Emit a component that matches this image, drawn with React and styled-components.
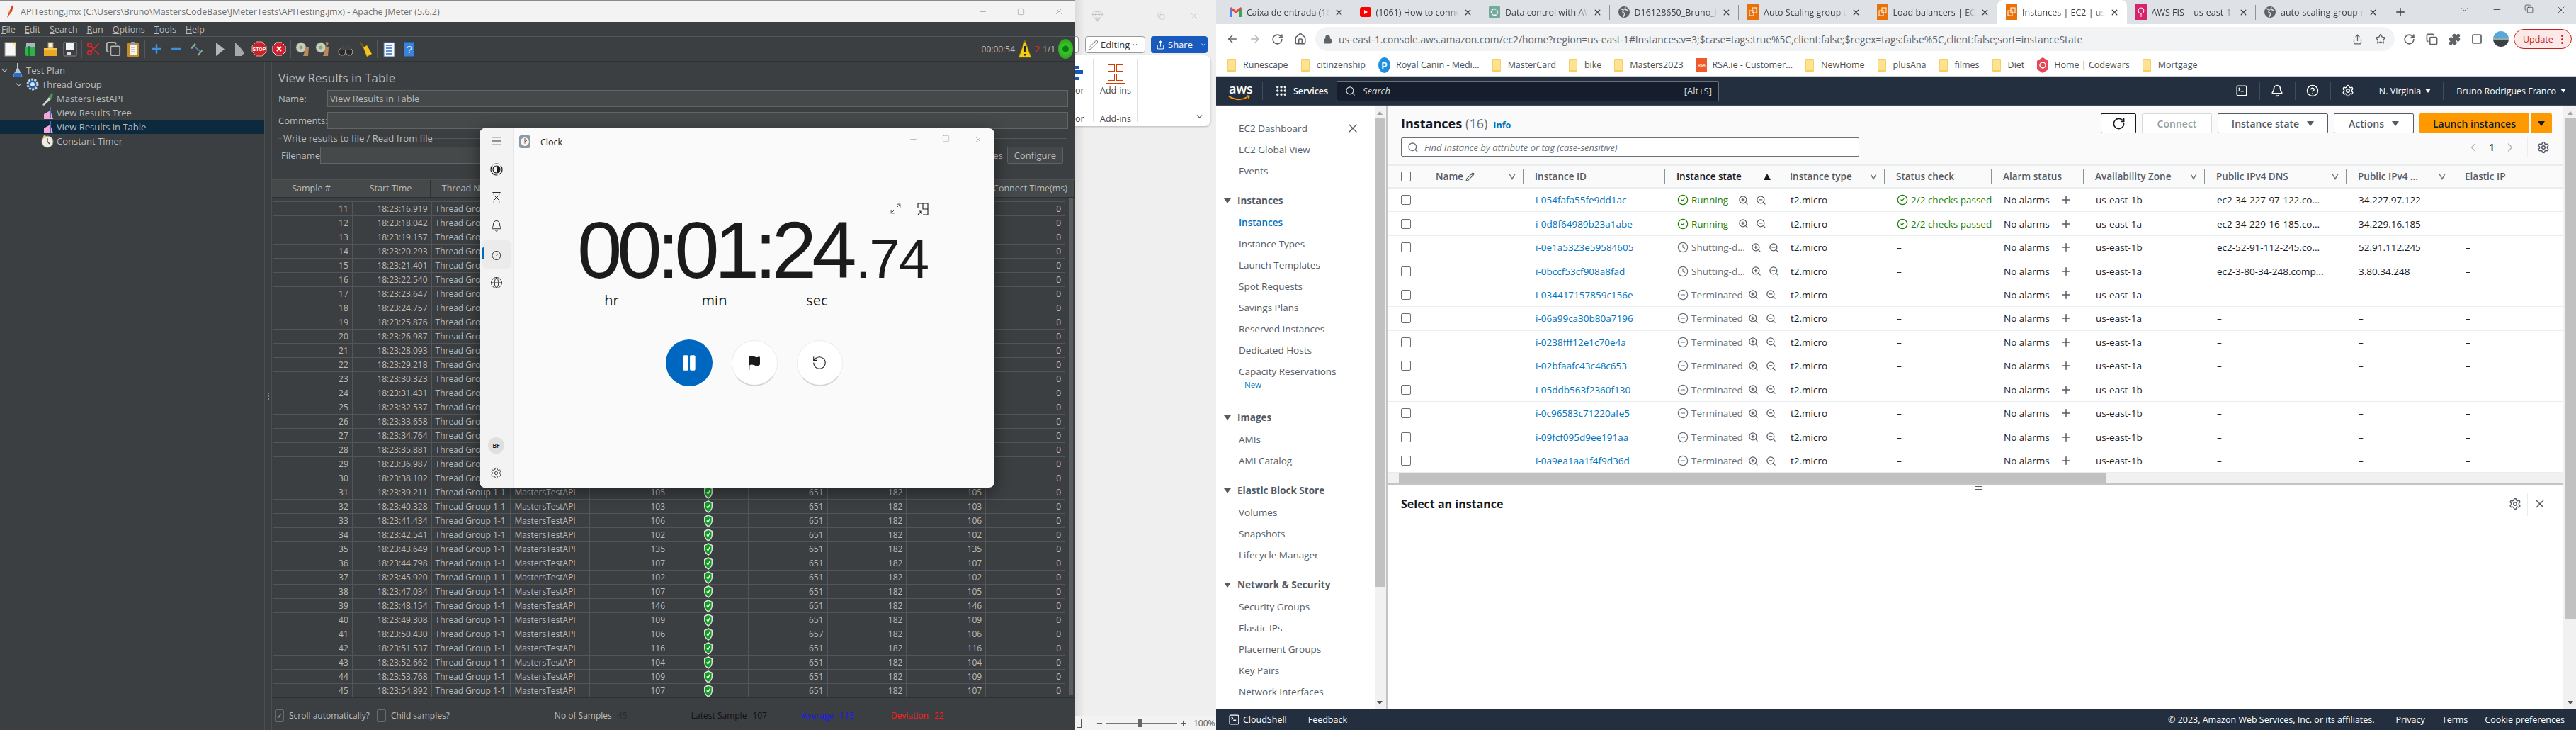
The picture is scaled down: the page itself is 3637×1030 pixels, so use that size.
import React from 'react';
import styled, { createGlobalStyle } from 'styled-components';
import {
  ArrowLeft, ArrowRight, Bell, ChevronDown, ChevronLeft, ChevronRight, CircleCheck, CircleHelp, CircleMinus,
  Clock, Copy, Flag, Gem, Globe, Grip, Hourglass, House, Lock, Maximize2, Menu, Minus, Pause, Pencil, Plus,
  Puzzle, RotateCcw, RotateCw, Scissors, Search, Settings, Share, Square, SquareTerminal, Star, Timer, X, ZoomIn, ZoomOut,
} from 'lucide-react';

const UI = '"Open Sans", "Noto Sans", sans-serif';

const GlobalStyle = createGlobalStyle`
  html, body { margin: 0; padding: 0; overflow: hidden; background: #efefef; }
  * { box-sizing: border-box; }
`;

const Desktop = styled.div`
  position: relative;
  display: flex;
  width: 3637px;
  height: 1030px;
  overflow: hidden;
  font-family: ${UI};
`;

/* ---------- JMeter ---------- */
const JMeter = styled.div`
  width: 1518px;
  flex: none;
  display: flex;
  flex-direction: column;
  background: #3c3f41;
  color: #bbbbbb;
  font-size: 12px;
`;
const TitleBar = styled.div`
  height: 31px;
  flex: none;
  display: flex;
  align-items: center;
  background: #f3f3f3;
  border-top: 1px solid #8a8a8a;
  color: #6f6f6f;
  font-size: 12.5px;
  padding: 0 0 0 7px;
  gap: 8px;
`;
const TitleText = styled.span`flex: 1;`;
const WinButton = styled.span`
  width: 46px;
  display: flex;
  justify-content: center;
  color: ${p => p.$color || '#777'};
`;
const MenuBar = styled.div`
  height: 21px;
  flex: none;
  display: flex;
  align-items: center;
  gap: 13px;
  padding-left: 2px;
  border-bottom: 1px solid #55585a;
  font-size: 12.5px;
  span::first-letter { text-decoration: underline; }
`;
const ToolBar = styled.div`
  height: 35px;
  flex: none;
  display: flex;
  align-items: center;
  padding-left: 1px;
  border-bottom: 1px solid #2f3234;
`;
const ToolSlot = styled.span`
  width: 28px;
  display: flex;
  justify-content: center;
`;
const ToolSep = styled.span`
  width: 5px;
  height: 26px;
  display: flex;
  justify-content: center;
  &::after { content: ''; width: 1px; background: #55585a; }
`;
const ToolStatus = styled.div`
  margin-left: auto;
  display: flex;
  align-items: center;
  gap: 4px;
  padding-right: 3px;
  font-size: 12px;
`;
const RedCount = styled.span`color: #ff2020;`;
const Orb = styled.span`
  width: 21px;
  height: 28px;
  border-radius: 50%;
  background: radial-gradient(circle, #0a7d0a 22%, #38c62c 30%, #2fa51f 75%, #178a10);
`;
const JBody = styled.div`
  flex: 1;
  display: flex;
  min-height: 0;
`;
const TreePane = styled.div`
  position: relative;
  width: 374px;
  flex: none;
  padding-top: 2px;
  border-right: 1px solid #4c4f51;
`;
const Guide = styled.span`
  position: absolute;
  left: ${p => p.$x}px;
  top: 21px;
  height: ${p => p.$h}px;
  width: 1px;
  background: #4c4f51;
`;
const TreeRow = styled.div`
  height: 20px;
  display: flex;
  align-items: center;
  gap: 4px;
  padding-left: ${p => p.$indent}px;
  font-size: 13px;
  background: ${p => p.$selected ? '#0d293e' : 'transparent'};
`;
const Splitter = styled.div`
  width: 10px;
  flex: none;
  display: flex;
  align-items: center;
  justify-content: center;
  border-right: 1px solid #4c4f51;
  padding-bottom: 0;
`;
const SplitGrip = styled.span`
  width: 2px;
  height: 10px;
  margin-top: 0;
  border-left: 2px dotted #8a8d8f;
`;
const ResultsPane = styled.div`
  flex: 1;
  display: flex;
  flex-direction: column;
  min-width: 0;
`;
const ResultsForm = styled.div`
  padding: 11px 10px 0 9px;
  display: flex;
  flex-direction: column;
`;
const PaneTitle = styled.div`
  height: 24px;
  font-size: 17px;
  line-height: 24px;
  margin-bottom: 5px;
`;
const FormRow = styled.div`
  height: 24px;
  display: flex;
  align-items: center;
  margin-bottom: 7px;
  font-size: 13px;
`;
const FormLabel = styled.span`
  width: ${p => p.$w}px;
  padding-left: ${p => p.$pad || 0}px;
  flex: none;
`;
const Field = styled.div`
  flex: 1;
  height: 24px;
  background: #45494a;
  border: 1px solid #646464;
  padding-left: 3px;
  line-height: 22px;
`;
const Legend = styled.div`
  height: 18px;
  display: flex;
  align-items: center;
  gap: 2px;
  font-size: 13px;
  margin-top: -3px;
  margin-bottom: 3px;
  padding-right: 2px;
  &::before { content: ''; width: 5px; height: 1px; background: #55585a; }
  &::after { content: ''; flex: 1; height: 1px; background: #55585a; }
`;
const ConfigureBtn = styled.span`
  width: 79px;
  height: 24px;
  margin-left: 7px;
  margin-right: 7px;
  flex: none;
  border: 1px solid #5e6264;
  border-radius: 2px;
  background: #44484a;
  text-align: center;
  line-height: 22px;
`;
const JTable = styled.div`
  margin-top: 15px;
  flex: 1;
  display: flex;
  flex-direction: column;
  position: relative;
  min-height: 0;
`;
const JHead = styled.div`
  height: 26px;
  flex: none;
  display: grid;
  grid-template-columns: 112px 112px repeat(7, 112px) 1fr;
  background: #45494a;
  border-top: 1px solid #4d5153;
  border-bottom: 1px solid #2f3234;
  margin-bottom: 5px;
`;
const JHeadCell = styled.span`
  text-align: center;
  line-height: 24px;
  font-size: 12.5px;
  white-space: nowrap;
  overflow: hidden;
  border-right: 1px solid #2f3234;
`;
const JRow = styled.div`
  height: 20px;
  flex: none;
  margin-left: 2px;
  width: 1118px;
  display: grid;
  grid-template-columns: repeat(10, 1fr);
  border-top: 1px solid #52565a;
`;
const JCell = styled.span`
  display: flex;
  align-items: center;
  justify-content: ${p => p.$align || 'flex-end'};
  padding: 0 5px;
  border-right: 1px solid #52565a;
  line-height: 19px;
  white-space: nowrap;
  overflow: hidden;
`;
const JScroll = styled.span`
  position: absolute;
  right: 3px;
  top: 27px;
  bottom: 4px;
  width: 5px;
  background: #5a5d5f;
`;
const JFooter = styled.div`
  height: 46px;
  flex: none;
  display: flex;
  align-items: center;
  padding: 4px 0 0 4px;
  border-top: 1px solid #2f3234;
`;
const JCheck = styled.span`
  width: 13px;
  height: 18px;
  border: 1px solid #6b6b6b;
  border-radius: 2px;
  display: flex;
  align-items: center;
  justify-content: center;
  font-size: 11px;
  margin-right: 7px;
`;
const FooterText = styled.span`
  margin-right: ${p => p.$mr || 0}px;
  white-space: nowrap;
`;
const Stat = styled.span`
  display: flex;
  gap: 8px;
  color: ${p => p.$color};
  width: ${p => p.$w}px;
  flex: none;
  white-space: nowrap;
`;
const StatLabel = styled.span`
  color: ${p => p.$color || 'inherit'};
`;

/* ---------- Clock ---------- */
const ClockWindow = styled.div`
  position: absolute;
  left: 677px;
  top: 181px;
  width: 727px;
  height: 507px;
  display: flex;
  border-radius: 8px;
  background: #fafafa;
  box-shadow: 0 6px 22px rgba(0, 0, 0, 0.45);
  overflow: hidden;
  color: #1b1b1b;
`;
const ClockNav = styled.div`
  width: 48px;
  flex: none;
  display: flex;
  flex-direction: column;
  align-items: center;
  background: #f3f3f3;
  border-right: 1px solid #e8e8e8;
`;
const NavItem = styled.span`
  position: relative;
  width: 40px;
  height: 40px;
  flex: none;
  display: flex;
  align-items: center;
  justify-content: center;
  border-radius: 5px;
  background: ${p => p.$active ? '#ebebeb' : 'transparent'};
  &::before {
    content: '';
    display: ${p => p.$active ? 'block' : 'none'};
    position: absolute;
    left: 0;
    top: 10px;
    width: 3px;
    height: 17px;
    border-radius: 2px;
    background: #0067c0;
  }
`;
const NavTop = styled.div`
  display: flex;
  flex-direction: column;
  align-items: center;
  margin-top: -2px;
`;
const Avatar = styled.span`
  width: 23px;
  height: 23px;
  margin-top: auto;
  border-radius: 50%;
  background: #dfdfdf;
  display: flex;
  align-items: center;
  justify-content: center;
  font-size: 9px;
  font-weight: 600;
`;
const NavGear = styled.span`
  margin: 19px 0 12px;
  display: flex;
`;
const ClockMain = styled.div`
  position: relative;
  flex: 1;
  display: flex;
  flex-direction: column;
`;
const ClockTitle = styled.div`
  height: 38px;
  display: flex;
  align-items: center;
  padding-left: 8px;
  gap: 14px;
  font-size: 12.5px;
`;
const ClockControls = styled.div`
  margin-left: auto;
  display: flex;
  color: #8c8c8c;
  margin-top: -6px;
`;
const TimeRow = styled.div`
  margin-top: 74px;
  display: flex;
  justify-content: center;
  align-items: baseline;
  font-family: "Liberation Sans", sans-serif;
  font-size: 114px;
  line-height: 120px;
  letter-spacing: -7px;
  padding-right: 4px;
`;
const Fraction = styled.span`
  font-size: 78px;
  letter-spacing: -2px;
  margin-left: 5px;
`;
const TimeTools = styled.div`
  position: absolute;
  left: 531px;
  top: 105px;
  display: flex;
  gap: 22px;
`;
const UnitRow = styled.div`
  margin-top: -15px;
  padding-left: 66px;
  display: flex;
  font-size: 20px;
  line-height: 28px;
`;
const Unit = styled.span`
  width: 145px;
  text-align: center;
`;
const ClockButtons = styled.div`
  margin-top: 41px;
  display: flex;
  justify-content: center;
  align-items: center;
  gap: 27px;
`;
const RoundBtn = styled.span`
  width: ${p => p.$primary ? 66 : 65}px;
  height: ${p => p.$primary ? 66 : 65}px;
  border-radius: 50%;
  display: flex;
  align-items: center;
  justify-content: center;
  background: ${p => p.$primary ? '#0067c0' : '#ffffff'};
  border: ${p => p.$primary ? 'none' : '1px solid #ececec'};
  border-bottom-width: ${p => p.$primary ? 0 : 2}px;
  border-bottom-color: #d4d4d4;
`;

/* ---------- Word ---------- */
const Word = styled.div`
  width: 199px;
  flex: none;
  display: flex;
  flex-direction: column;
  background: linear-gradient(90deg, #dcdcdc 0, #efefef 14px);
  color: #444;
`;
const WordTitle = styled.div`
  height: 51px;
  flex: none;
  display: flex;
  align-items: center;
  padding-left: 23px;
  gap: 25px;
  color: #b3b3b3;
  padding-bottom: 6px;
`;
const WordActions = styled.div`
  height: 24px;
  flex: none;
  display: flex;
  gap: 8px;
`;
const CutButton = styled.span`
  width: 5px;
  margin-right: 1px;
  background: #fff;
  border: 1px solid #9a9a9a;
  border-left: 0;
  border-radius: 0 4px 4px 0;
`;
const EditingBtn = styled.span`
  width: 85px;
  display: flex;
  align-items: center;
  gap: 3px;
  padding-left: 3px;
  background: #fff;
  border: 1px solid #9a9a9a;
  border-radius: 4px;
  font-size: 13px;
  color: #333;
`;
const ShareBtn = styled.span`
  width: 80px;
  display: flex;
  align-items: center;
  gap: 4px;
  padding-left: 7px;
  background: #185abd;
  border-radius: 4px;
  color: #fff;
  font-size: 13px;
`;
const Ribbon = styled.div`
  position: relative;
  width: 191px;
  height: 100px;
  margin-top: 3px;
  display: flex;
  background: #fff;
  border-radius: 0 8px 8px 0;
  box-shadow: 0 1px 3px rgba(0, 0, 0, 0.25);
  font-size: 12.5px;
  color: #444;
`;
const RibbonGroup = styled.div`
  width: ${p => p.$w}px;
  height: 89px;
  flex: none;
  display: flex;
  flex-direction: column;
  align-items: ${p => p.$align || 'center'};
  border-right: 1px solid #e1e1e1;
  margin: 5px 0 6px;
`;
const RibbonIcon = styled.span`
  height: 33px;
  margin-top: 4px;
  flex: none;
  display: flex;
  justify-content: center;
`;
const RibbonLabel = styled.span`
  height: 40px;
  flex: none;
  line-height: 18px;
  margin-top: -1px;
`;
const RibbonGroupName = styled.span`
  flex: none;
  line-height: 18px;
`;
const RibbonChevron = styled.span`
  position: absolute;
  right: 9px;
  bottom: 7px;
  display: flex;
  color: #555;
`;
const WordStatus = styled.div`
  margin-top: auto;
  height: 20px;
  display: flex;
  align-items: center;
  background: #f3f3f3;
  font-size: 12px;
  color: #555;
`;
const StatusGlyph = styled.span`
  width: 7px;
  height: 13px;
  margin-left: 2px;
  margin-right: 20px;
  border: 1px solid #555;
  border-left: 0;
`;
const ZoomTrack = styled.span`
  position: relative;
  width: 100px;
  height: 1px;
  margin: 0 3px 0 1px;
  background: #777;
  &::after {
    content: '';
    position: absolute;
    left: 45px;
    top: -5px;
    width: 5px;
    height: 11px;
    background: #666;
  }
`;

/* ---------- Chrome ---------- */
const Chrome = styled.div`
  width: 1920px;
  flex: none;
  display: flex;
  flex-direction: column;
  background: #fff;
`;
const TabStrip = styled.div`
  height: 34px;
  flex: none;
  display: flex;
  align-items: stretch;
  background: #dee1e6;
  padding-left: 8px;
`;
const Tab = styled.div`
  position: relative;
  width: 182.5px;
  flex: none;
  display: flex;
  align-items: center;
  gap: 7px;
  padding: 0 11px 0 12px;
  font-size: 12.5px;
  color: #3c4043;
  background: ${p => p.$active ? '#fff' : 'transparent'};
  border-radius: ${p => p.$active ? '8px 8px 0 0' : '0'};
  &::after {
    content: '';
    display: ${p => p.$sep ? 'block' : 'none'};
    position: absolute;
    right: 0;
    top: 7px;
    bottom: 6px;
    width: 1px;
    background: #8f9296;
  }
`;
const TabTitle = styled.span`
  flex: 1;
  white-space: nowrap;
  overflow: hidden;
  mask-image: linear-gradient(90deg, #000 88%, transparent);
`;
const StripRight = styled.div`
  flex: 1;
  display: flex;
  align-items: center;
  color: #3c4043;
  padding: 0 13px 0 12px;
`;
const StripControls = styled.div`
  margin-left: auto;
  display: flex;
  gap: 31px;
  margin-top: -6px;
`;
const Toolbar = styled.div`
  height: 42px;
  flex: none;
  display: flex;
  align-items: center;
  padding-left: 14px;
  color: #5f6368;
`;
const NavBtn = styled.span`
  width: 32px;
  display: flex;
  justify-content: flex-start;
  color: ${p => p.$dim ? '#b4b7bb' : '#5f6368'};
`;
const Omnibox = styled.div`
  width: 1524px;
  height: 34px;
  flex: none;
  margin-left: -2px;
  display: flex;
  align-items: center;
  padding: 0 12px 0 11px;
  gap: 9px;
  border-radius: 17px;
  background: #f1f3f4;
`;
const Url = styled.span`
  flex: 1;
  font-size: 13.8px;
  color: #5f6368;
  white-space: nowrap;
`;
const Extensions = styled.div`
  display: flex;
  align-items: center;
  gap: 15px;
  padding-left: 12px;
  flex: 1;
`;
const ProfilePic = styled.span`
  width: 22px;
  height: 22px;
  border-radius: 50%;
  background: linear-gradient(180deg, #5aa7d8 0 45%, #8fb2a5 45% 60%, #3b3f46 60%);
`;
const UpdatePill = styled.span`
  width: 82px;
  height: 28px;
  margin-left: -8px;
  display: flex;
  align-items: center;
  justify-content: space-between;
  padding: 0 11px 0 12px;
  border: 1px solid #c5221f;
  border-radius: 14px;
  background: #fce8e6;
  color: #c5221f;
  font-size: 12.5px;
`;
const Dots = styled.span`
  display: flex;
  flex-direction: column;
  gap: 2px;
  i { width: 3px; height: 3px; border-radius: 50%; background: #c5221f; }
`;
const Bookmarks = styled.div`
  height: 32px;
  flex: none;
  display: flex;
  align-items: center;
  gap: 18px;
  padding-left: 16px;
  border-bottom: 1px solid #d0d3d6;
  font-size: 12.5px;
  color: #4a4d51;
`;
const Bookmark = styled.span`
  display: flex;
  align-items: center;
  gap: ${p => p.$gap || 10}px;
  white-space: nowrap;
`;
const Folder = styled.span`
  width: 12px;
  height: 18px;
  background: #fde293;
  border: 1px solid #f8cf5c;
  border-bottom-width: 2px;
  border-radius: 1px;
`;
const AwsHeader = styled.div`
  height: 42px;
  flex: none;
  display: flex;
  align-items: center;
  background: #232f3e;
  color: #fff;
  font-size: 13px;
  border-bottom: 2px solid #3f4a58;
`;
const AwsLogo = styled.span`
  position: relative;
  width: 66px;
  height: 26px;
  padding-left: 18px;
  flex: none;
  border-right: 1px solid #414d5c;
  font-size: 18px;
  font-weight: 600;
  line-height: 20px;
`;
const LogoSmile = styled.span`
  position: absolute;
  left: 17px;
  top: 19px;
`;
const ServicesBtn = styled.span`
  display: flex;
  align-items: center;
  gap: 8px;
  padding-left: 17px;
  width: 104px;
  flex: none;
  font-weight: 600;
  font-size: 12.5px;
`;
const AwsSearch = styled.div`
  width: 540px;
  height: 29px;
  flex: none;
  display: flex;
  align-items: center;
  gap: 10px;
  padding: 0 9px 0 11px;
  background: #161e2d;
  border: 1px solid #687078;
  border-radius: 2px;
  color: #d5dbdb;
  i { flex: 1; font-size: 13px; }
`;
const HeaderRight = styled.div`
  margin-left: auto;
  display: flex;
  align-items: center;
  height: 26px;
  padding-right: 14px;
`;
const HeaderIcon = styled.span`
  width: 50px;
  height: 26px;
  display: flex;
  align-items: center;
  justify-content: center;
  border-right: 1px solid #414d5c;
`;
const HeaderMenu = styled.span`
  display: flex;
  align-items: center;
  gap: 6px;
  padding: 0 ${p => p.$last ? 0 : 17}px 0 18px;
  height: 26px;
  font-size: 12.5px;
  font-weight: 500;
  white-space: nowrap;
  border-right: ${p => p.$last ? 'none' : '1px solid #414d5c'};
`;
const Caret = styled.span`
  width: 0;
  height: 0;
  border-left: ${p => p.$s || 4}px solid transparent;
  border-right: ${p => p.$s || 4}px solid transparent;
  border-top: ${p => (p.$s || 4) + 2}px solid ${p => p.$color || 'currentColor'};
  flex: none;
`;
const ConsoleBody = styled.div`
  flex: 1;
  display: flex;
  min-height: 0;
`;
const Sidebar = styled.div`
  position: relative;
  width: 224px;
  flex: none;
  padding: 16px 0 0 32px;
  font-size: 13.5px;
  color: #545b64;
`;
const SideItem = styled.div`
  height: 30px;
  line-height: 30px;
  white-space: nowrap;
  color: ${p => p.$active ? '#0073bb' : '#545b64'};
  font-weight: ${p => p.$active ? 600 : 400};
`;
const SideHeader = styled.div`
  height: 30px;
  margin: ${p => p.$flush ? 0 : 12}px 0 1px -21px;
  display: flex;
  align-items: center;
  gap: 9px;
  font-weight: 700;
  white-space: nowrap;
`;
const NewTag = styled.div`
  width: fit-content;
  margin: -4px 0 22px 8px;
  font-size: 11.5px;
  font-weight: 500;
  line-height: 16px;
  color: #0073bb;
  border-bottom: 1px dashed #0073bb;
`;
const SideClose = styled.span`
  position: absolute;
  right: 21px;
  top: 21px;
  display: flex;
  color: #545b64;
`;
const VScroll = styled.div`
  position: relative;
  width: ${p => p.$w}px;
  flex: none;
  background: #f1f1f1;
  border-right: ${p => p.$line ? '2px solid #c4c4c4' : '0'};
`;
const VThumb = styled.span`
  position: absolute;
  left: ${p => p.$left}px;
  right: ${p => p.$right}px;
  top: 17px;
  height: ${p => p.$h}px;
  background: #c1c1c1;
`;
const ArrowUp = styled.span`
  position: absolute;
  left: ${p => p.$left}px;
  top: 7px;
  border-left: 4px solid transparent;
  border-right: 4px solid transparent;
  border-bottom: 5px solid #a3a3a3;
`;
const ArrowDown = styled.span`
  position: absolute;
  left: ${p => p.$left}px;
  bottom: 7px;
  border-left: 4px solid transparent;
  border-right: 4px solid transparent;
  border-top: 5px solid #505050;
`;
const Main = styled.div`
  flex: 1;
  min-width: 0;
  display: flex;
  flex-direction: column;
  background: #fafafa;
`;
const InstancesTop = styled.div`
  padding: 10px 16px 0 19px;
  flex: none;
`;
const TopRow = styled.div`
  height: 28px;
  display: flex;
  align-items: center;
  gap: 8px;
`;
const Heading = styled.div`
  flex: 1;
  font-size: 18px;
  font-weight: 700;
  color: #16191f;
  display: flex;
  align-items: baseline;
  gap: 5px;
  span { font-weight: 400; color: #687078; }
  a { font-size: 12.5px; font-weight: 700; color: #0073bb; margin-left: 3px; }
`;
const ConsoleBtn = styled.span`
  width: ${p => p.$w}px;
  height: 28px;
  flex: none;
  display: flex;
  align-items: center;
  justify-content: center;
  gap: 11px;
  background: #fff;
  border: 1px solid ${p => p.$dark ? '#16191f' : p.$dim ? '#d5dbdb' : '#545b64'};
  border-radius: 2px;
  font-size: 14px;
  font-weight: 600;
  color: ${p => p.$dark ? '#16191f' : p.$dim ? '#95a0a0' : '#545b64'};
`;
const LaunchGroup = styled.span`
  display: flex;
  gap: 2px;
`;
const LaunchBtn = styled.span`
  width: ${p => p.$w}px;
  height: 28px;
  display: flex;
  align-items: center;
  justify-content: center;
  background: #ff9900;
  border-radius: ${p => p.$radius};
  color: #16191f;
  font-size: 14px;
  font-weight: 600;
`;
const FilterRow = styled.div`
  height: 27px;
  margin-top: 6px;
  display: flex;
  align-items: center;
  justify-content: space-between;
`;
const FilterBox = styled.div`
  width: 647px;
  height: 27px;
  display: flex;
  align-items: center;
  gap: 8px;
  padding-left: 8px;
  background: #fff;
  border: 1px solid #687078;
  border-radius: 2px;
  font-size: 13px;
  font-style: italic;
  color: #687078;
`;
const Pager = styled.div`
  display: flex;
  align-items: center;
  height: 27px;
  font-size: 14px;
  font-weight: 600;
  color: #16191f;
  gap: 12px;
  padding-right: 3px;
`;
const PagerGear = styled.span`
  height: 27px;
  padding-left: 13px;
  display: flex;
  align-items: center;
  border-left: 1px solid #eaeded;
  margin-left: 2px;
`;
const awsColumns = '52px 140px 200px 160px 150px 151px 130px 171px 200px 151px 151px 1fr';
const HeadRow = styled.div`
  margin-top: 11px;
  height: 34px;
  flex: none;
  display: grid;
  grid-template-columns: ${awsColumns};
  align-items: center;
  border-top: 2px solid #eaeded;
  border-bottom: 2px solid #eaeded;
`;
const HeadCell = styled.span`
  height: 20px;
  display: flex;
  align-items: center;
  justify-content: space-between;
  padding: 0 10px 0 16px;
  border-right: 1px solid #879596;
  font-size: 13.5px;
  font-weight: 600;
  white-space: nowrap;
  color: ${p => p.$dark ? '#16191f' : '#545b64'};
`;
const CheckCell = styled.span`
  display: flex;
  align-items: center;
  padding-left: 19px;
`;
const CheckBox = styled.span`
  width: 14px;
  height: 14px;
  background: #fff;
  border: 1px solid #687078;
  border-radius: 2px;
`;
const HollowTri = styled.span`
  width: 0;
  height: 0;
  border-left: 5px solid transparent;
  border-right: 5px solid transparent;
  border-top: 9px solid #687078;
  position: relative;
  &::after {
    content: '';
    position: absolute;
    left: -3px;
    top: -8px;
    border-left: 3px solid transparent;
    border-right: 3px solid transparent;
    border-top: 5px solid #fafafa;
  }
`;
const SortTri = styled.span`
  width: 0;
  height: 0;
  border-left: 5px solid transparent;
  border-right: 5px solid transparent;
  border-bottom: 9px solid #16191f;
`;
const NameHead = styled.span`
  display: flex;
  align-items: center;
  gap: 3px;
`;
const DataRow = styled.div`
  height: 33.45px;
  flex: none;
  display: grid;
  grid-template-columns: ${awsColumns};
  align-items: center;
  background: #fff;
  border-bottom: 1px solid #eaeded;
  font-size: 13.5px;
  color: #16191f;
`;
const DataCell = styled.span`
  display: flex;
  align-items: center;
  gap: ${p => p.$gap || 0}px;
  padding-left: 17px;
  overflow: hidden;
  white-space: nowrap;
`;
const IdLink = styled(DataCell)`color: #0073bb;`;
const StateText = styled.span`
  color: ${p => p.$color};
  margin-right: ${p => p.$mr || 6}px;
`;
const HScroll = styled.div`
  height: 17px;
  flex: none;
  padding-left: 16px;
  background: #f1f1f1;
  border-bottom: 2px solid #c4c4c4;
`;
const HThumb = styled.div`
  width: 999px;
  height: 15px;
  background: #c1c1c1;
`;
const DetailPane = styled.div`
  position: relative;
  flex: 1;
  background: #fff;
`;
const DetailHead = styled.div`
  height: 54px;
  display: flex;
  align-items: center;
  padding: 0 24px 0 19px;
  font-size: 16px;
  font-weight: 700;
  color: #16191f;
`;
const DetailTools = styled.span`
  margin-left: auto;
  display: flex;
  align-items: center;
  color: #545b64;
  gap: 8px;
`;
const ToolDivider = styled.span`
  width: 1px;
  height: 33px;
  background: #eaeded;
`;
const Sash = styled.span`
  position: absolute;
  left: 830px;
  top: 2px;
  width: 10px;
  height: 5px;
  border-top: 1px solid #545b64;
  border-bottom: 1px solid #545b64;
`;
const AwsFooter = styled.div`
  height: 29px;
  flex: none;
  display: flex;
  align-items: center;
  padding: 0 16px 0 17px;
  background: #232f3e;
  color: #fff;
  font-size: 12.5px;
  font-weight: 500;
  white-space: nowrap;
`;
const FootLink = styled.span`
  display: flex;
  align-items: center;
  gap: 4px;
  margin-right: ${p => p.$mr || 0}px;
`;
const FootRight = styled.div`
  margin-left: auto;
  display: flex;
  gap: 24px;
  span:first-child { margin-right: 6px; }
`;

/* ---------- small drawn icons ---------- */
const Svg = ({ s = 22, w, h, children }) => (
  <svg width={w || s} height={h || s} viewBox={`0 0 ${w || s} ${h || s}`} style={{ display: 'block', flex: 'none' }}>{children}</svg>
);

const JMeterFeather = () => (
  <Svg w={14} h={20}>
    <path d="M3 19 L5 12 L10 2 L12 1 L10 10 Z" fill="#d9381e" />
    <path d="M5 12 L8 6 L6 14 Z" fill="#f5a623" />
  </Svg>
);
const PageIcon = () => <Svg><rect x="3" y="2" width="15" height="19" fill="#f7f7f5" stroke="#999" /><circle cx="17" cy="4" r="2" fill="#ffe45c" /></Svg>;
const BookIcon = () => <Svg><rect x="4" y="7" width="14" height="14" rx="2" fill="#2eb34b" /><rect x="5" y="2" width="12" height="7" fill="#aab6c4" /><path d="M9 7v14" stroke="#1b7f33" strokeWidth="2" /></Svg>;
const FolderIcon = () => <Svg><rect x="8" y="2" width="7" height="8" fill="#f5f0de" stroke="#a98d4c" /><path d="M2 10h18v11H2z" fill="#e9a825" /><path d="M2 10h18v3H2z" fill="#f5c753" /></Svg>;
const SaveIcon = () => <Svg><rect x="2" y="2" width="18" height="19" rx="1" fill="#3d3f42" stroke="#8a8a8a" /><rect x="5" y="3" width="12" height="9" fill="#f2f2f2" /><rect x="6" y="15" width="6" height="5" fill="#dcdcdc" /></Svg>;
const PasteIcon = () => <Svg><rect x="3" y="3" width="16" height="19" rx="1" fill="#c98a2c" /><rect x="6" y="6" width="10" height="13" fill="#f5f5f0" /><path d="M8 9h6M8 12h6M8 15h6" stroke="#999" /><rect x="8" y="1" width="6" height="4" fill="#999" /></Svg>;
const StopIcon = () => (
  <Svg>
    <path d="M7 1h8l6 6v8l-6 6H7l-6-6V7z" fill="#c9242c" stroke="#e8a0a0" />
    <text x="11" y="14" textAnchor="middle" fontSize="7" fontWeight="700" fill="#fff" fontFamily="Liberation Sans">STOP</text>
  </Svg>
);
const HaltIcon = () => <Svg><path d="M7 2h8l5 5v8l-5 5H7l-5-5V7z" fill="#d81e2c" stroke="#eee" /><path d="M8 8l6 6M14 8l-6 6" stroke="#fff" strokeWidth="2.4" /></Svg>;
const PlayIcon = ({ ghost }) => <Svg><path d={ghost ? 'M5 2l8 8 5 7-4 4H5z' : 'M6 2l12 9.5L6 21z'} fill={ghost ? '#a8a8a8' : '#b5b5b5'} /></Svg>;
const ToggleIcon = () => <Svg><path d="M3 10l6-7 2 2-6 6zM14 21l6-7-1-2-6 7z" fill="#8eb089" /><path d="M10 9l6 5" stroke="#4a90d9" strokeWidth="1.5" /></Svg>;
const ClearIcon = ({ two }) => (
  <Svg>
    <circle cx="9" cy="9" r="7" fill="#c9cdc9" stroke="#777" strokeDasharray="3 1.5" />
    <circle cx="9" cy="9" r="2.5" fill="#7fb24a" />
    <path d="M12 21l4-12h4l-1 12z" fill="#b98a57" />
    {two && <path d="M16 1l4 1-3 8z" fill="#b98a57" />}
  </Svg>
);
const BinocularIcon = () => <Svg><circle cx="6" cy="15" r="5" fill="#2b2b2b" stroke="#bbb" /><circle cx="16" cy="15" r="5" fill="#2b2b2b" stroke="#bbb" /><path d="M5 6h4l2 5 2-5h4l2 6H3z" fill="#444" /></Svg>;
const BroomIcon = () => <Svg><path d="M3 2l7 8" stroke="#7a5a20" strokeWidth="2.4" /><path d="M8 9l5-3 7 12-7 4z" fill="#f0c419" /></Svg>;
const LogIcon = () => <Svg><rect x="4" y="2" width="15" height="20" fill="#f5f7fa" stroke="#4a6fa5" /><path d="M7 6h9M7 10h9M7 14h9M7 18h9" stroke="#2f6fc1" strokeWidth="1.6" /></Svg>;
const HelpBook = () => (
  <Svg>
    <rect x="4" y="1" width="15" height="21" rx="1" fill="#3b82d8" stroke="#1c3f70" />
    <text x="12" y="17" textAnchor="middle" fontSize="15" fill="#dfeaf8" fontFamily="Liberation Sans">?</text>
  </Svg>
);
const FlaskIcon = () => <Svg w={16} h={20}><path d="M7 0h2v7l5 10q1 3-2 3H4q-3 0-2-3l5-10z" fill="#b9c4cf" /><path d="M4 14h8l2 4-2 2H4l-2-2z" fill="#1f6fd1" /></Svg>;
const GearIcon = () => <Svg w={18} h={20}><circle cx="9" cy="10" r="7" fill="#1f5fa8" stroke="#d0d0d0" strokeWidth="3" strokeDasharray="3 1.4" /><circle cx="9" cy="10" r="3" fill="#d8e6f5" /></Svg>;
const PipetteIcon = () => <Svg w={18} h={20}><path d="M2 19l9-11 3 3-10 9z" fill="#d0d0d0" /><path d="M11 8l4-6 2 2-3 7z" fill="#3ea04a" /></Svg>;
const ListenerIcon = () => <Svg w={16} h={20}><path d="M2 19V12L11 7l4 12z" fill="#f2a6dc" /><path d="M11 2v16" stroke="#3f74c4" strokeWidth="2" /></Svg>;
const TimerIcon = () => <Svg w={18} h={20}><circle cx="9" cy="11" r="8" fill="#f0ece0" stroke="#9a9a9a" /><path d="M9 11V6M9 11l3 3" stroke="#444" strokeWidth="1.3" /><circle cx="5" cy="4" r="2" fill="#e8cf3a" /></Svg>;
const Shield = () => (
  <Svg w={12} h={18}>
    <path d="M6 0l6 3v6q0 5-6 9-6-4-6-9V3z" fill="#ddd" />
    <path d="M6 2l4.5 2v5q0 4-4.5 7-4.5-3-4.5-7V4z" fill="#0d9c1c" />
    <path d="M3.8 8.4L5.5 11 8.4 5.6" stroke="#fff" strokeWidth="1.3" fill="none" />
  </Svg>
);
const WarnIcon = () => <Svg w={20} h={26}><path d="M10 1l9 24H1z" fill="#f6c915" stroke="#7a6a10" /><path d="M10 9v9M10 20v2.5" stroke="#222" strokeWidth="2" /></Svg>;
const FocusIcon = () => (
  <Svg w={18} h={18}>
    <circle cx="9" cy="9" r="8" fill="none" stroke="#1b1b1b" strokeWidth="1.2" strokeDasharray="9 2" />
    <circle cx="9" cy="9" r="5" fill="none" stroke="#1b1b1b" strokeWidth="1.2" />
    <path d="M9 4a5 5 0 0 1 0 10z" fill="#1b1b1b" />
  </Svg>
);
const OverlayIcon = () => (
  <Svg w={16} h={18}>
    <path d="M1 8V1h14v16H8M8 1v8h7" fill="none" stroke="#1b1b1b" strokeWidth="1.1" />
    <path d="M1 17l5-5M2 12h4v4" fill="none" stroke="#1b1b1b" strokeWidth="1.1" />
  </Svg>
);

const GmailIcon = () => <Svg w={16} h={14}><path d="M0 2v12h3V5l5 4 5-4v9h3V2l-1-2-7 5-7-5z" fill="#ea4335" /><path d="M0 2v12h3V5z" fill="#4285f4" /><path d="M13 5v9h3V2z" fill="#34a853" /></Svg>;
const YoutubeIcon = () => <Svg w={16} h={14}><rect width="16" height="14" y="0" rx="3" fill="#ff0000" /><path d="M6 4l5 3-5 3z" fill="#fff" /></Svg>;
const ChatIcon = () => <Svg w={16} h={18}><rect width="16" height="18" rx="3" fill="#74aa9c" /><circle cx="8" cy="9" r="4.5" fill="none" stroke="#fff" strokeWidth="1.4" strokeDasharray="3 1" /></Svg>;
const GlobeTab = () => <Svg w={16} h={16}><circle cx="8" cy="8" r="8" fill="#5f6368" /><path d="M3 3l4 2-1 3 3 2-2 5M10 1l-1 3 5 2" stroke="#dee1e6" strokeWidth="1.6" fill="none" /></Svg>;
const AwsTab = () => <Svg w={16} h={22}><rect width="16" height="22" fill="#e8710a" /><rect x="7" y="5" width="6" height="7" fill="none" stroke="#fff" /><rect x="3" y="9" width="6" height="7" fill="none" stroke="#fff" /></Svg>;
const FisTab = () => <Svg w={16} h={22}><rect width="16" height="22" fill="#d6246e" /><circle cx="8" cy="9" r="4" fill="none" stroke="#fff" /><path d="M8 13v5" stroke="#fff" /></Svg>;
const RoyalIcon = () => (
  <Svg w={17} h={22}>
    <ellipse cx="8.5" cy="11" rx="8.5" ry="11" fill="#1f8fe0" />
    <text x="8.5" y="16" textAnchor="middle" fontSize="12" fontWeight="700" fill="#fff" fontFamily="Liberation Sans">P</text>
  </Svg>
);
const RsaIcon = () => (
  <Svg w={15} h={20}>
    <rect width="15" height="20" fill="#ee5a2b" />
    <text x="7.5" y="12" textAnchor="middle" fontSize="5" fontWeight="700" fill="#fff" fontFamily="Liberation Sans">RSA</text>
  </Svg>
);
const CodewarsIcon = () => <Svg w={16} h={22}><path d="M8 0l8 5v12l-8 5-8-5V5z" fill="#e6455a" /><circle cx="8" cy="11" r="4" fill="none" stroke="#fff" strokeWidth="1.4" /></Svg>;
const AddinsIcon = () => (
  <Svg w={28} h={31}>
    <rect x="0.5" y="0.5" width="27" height="30" fill="none" stroke="#d83b01" />
    <rect x="3.5" y="4.5" width="9" height="9" fill="none" stroke="#d83b01" />
    <rect x="15.5" y="4.5" width="9" height="9" fill="none" stroke="#d83b01" />
    <rect x="3.5" y="17.5" width="9" height="9" fill="none" stroke="#d83b01" />
    <rect x="15.5" y="17.5" width="9" height="9" fill="none" stroke="#d83b01" />
  </Svg>
);
const BlueSliver = () => <Svg w={12} h={26}><path d="M0 6h6v4H0zM0 12h11v5H0zM0 21h5v5H0z" fill="#1857b6" /></Svg>;
const ClockApp = () => <Svg w={16} h={20}><rect y="1" width="16" height="18" rx="3" fill="#8d98a3" /><circle cx="8" cy="10" r="6" fill="#f5f5f5" /><path d="M8 10V5M8 10l3-2" stroke="#555" /><path d="M8 10v3" stroke="#e8542c" /></Svg>;
const SmileArrow = () => <Svg w={32} h={8}><path d="M1 2q14 8 26 1" fill="none" stroke="#ff9900" strokeWidth="2" /><path d="M26 0l5 1-2 5z" fill="#ff9900" /></Svg>;

const tabs = [
  { icon: <GmailIcon />, title: 'Caixa de entrada (16.165)', sep: true },
  { icon: <YoutubeIcon />, title: '(1061) How to connect to', sep: true },
  { icon: <ChatIcon />, title: 'Data control with AWS Lambda', sep: true },
  { icon: <GlobeTab />, title: 'D16128650_Bruno_Franco', sep: true },
  { icon: <AwsTab />, title: 'Auto Scaling group details', sep: true },
  { icon: <AwsTab />, title: 'Load balancers | EC2 | us-east', sep: false },
  { icon: <AwsTab />, title: 'Instances | EC2 | us-east-1', active: true },
  { icon: <FisTab />, title: 'AWS FIS | us-east-1', sep: true },
  { icon: <GlobeTab />, title: 'auto-scaling-group-metrics', sep: true },
];

const bookmarks = [
  ['folder', 'Runescape'], ['folder', 'citinzenship'], ['royal', 'Royal Canin - Medi...'], ['folder', 'MasterCard'],
  ['folder', 'bike'], ['folder', 'Masters2023'], ['rsa', 'RSA.ie - Customer...'], ['folder', 'NewHome'],
  ['folder', 'plusAna'], ['folder', 'filmes'], ['folder', 'Diet'], ['code', 'Home | Codewars'], ['folder', 'Mortgage'],
];

const sideNav = [
  { item: 'EC2 Dashboard' }, { item: 'EC2 Global View' }, { item: 'Events' },
  { head: 'Instances' }, { item: 'Instances', active: true }, { item: 'Instance Types' }, { item: 'Launch Templates' },
  { item: 'Spot Requests' }, { item: 'Savings Plans' }, { item: 'Reserved Instances' }, { item: 'Dedicated Hosts' },
  { item: 'Capacity Reservations' }, { tag: 'New' },
  { head: 'Images', flush: true }, { item: 'AMIs' }, { item: 'AMI Catalog' },
  { head: 'Elastic Block Store' }, { item: 'Volumes' }, { item: 'Snapshots' }, { item: 'Lifecycle Manager' },
  { head: 'Network & Security' }, { item: 'Security Groups' }, { item: 'Elastic IPs' }, { item: 'Placement Groups' },
  { item: 'Key Pairs' }, { item: 'Network Interfaces' },
];

const instances = [
  ['i-054fafa55fe9dd1ac', 'run', 'us-east-1b', 'ec2-34-227-97-122.co...', '34.227.97.122'],
  ['i-0d8f64989b23a1abe', 'run', 'us-east-1a', 'ec2-34-229-16-185.co...', '34.229.16.185'],
  ['i-0e1a5323e59584605', 'shut', 'us-east-1b', 'ec2-52-91-112-245.co...', '52.91.112.245'],
  ['i-0bccf53cf908a8fad', 'shut', 'us-east-1a', 'ec2-3-80-34-248.comp...', '3.80.34.248'],
  ['i-034417157859c156e', 'term', 'us-east-1a', '–', '–'],
  ['i-06a99ca30b80a7196', 'term', 'us-east-1a', '–', '–'],
  ['i-0238fff12e1c70e4a', 'term', 'us-east-1a', '–', '–'],
  ['i-02bfaafc43c48c653', 'term', 'us-east-1a', '–', '–'],
  ['i-05ddb563f2360f130', 'term', 'us-east-1b', '–', '–'],
  ['i-0c96583c71220afe5', 'term', 'us-east-1b', '–', '–'],
  ['i-09fcf095d9ee191aa', 'term', 'us-east-1b', '–', '–'],
  ['i-0a9ea1aa1f4f9d36d', 'term', 'us-east-1b', '–', '–'],
];

const stateInfo = {
  run: { label: 'Running', color: '#1d8102', Icon: CircleCheck, mr: 10 },
  shut: { label: 'Shutting-d...', color: '#687078', Icon: Clock, mr: 4 },
  term: { label: 'Terminated', color: '#687078', Icon: CircleMinus, mr: 3 },
};

const sampleTimes = [
  '16.919', '18.042', '19.157', '20.293', '21.401', '22.540', '23.647', '24.757', '25.876', '26.987',
  '28.093', '29.218', '30.323', '31.431', '32.537', '33.658', '34.764', '35.881', '36.987', '38.102',
  '39.211', '40.328', '41.434', '42.541', '43.649', '44.798', '45.920', '47.034', '48.154', '49.308',
  '50.430', '51.537', '52.662', '53.768', '54.892',
];
// rows above sample 31 sit under the Clock window, only their outer columns can be seen
const visibleMs = [105, 103, 106, 102, 135, 107, 102, 107, 146, 109, 106, 116, 104, 109, 107];

const jColumns = ['Sample #', 'Start Time', 'Thread Name', 'Sample Label', 'Sample Time(ms)', 'Status', 'Bytes', 'Sent Bytes', 'Latency', 'Connect Time(ms)'];

const toolbar = [
  <PageIcon />, <BookIcon />, <FolderIcon />, <SaveIcon />, null,
  <Scissors size={22} color="#d8262c" />, <Copy size={22} color="#b5b5b5" />, <PasteIcon />, null,
  <Plus size={20} color="#3d8fe0" strokeWidth={3} />, <Minus size={20} color="#3d8fe0" strokeWidth={3} />, <ToggleIcon />, null,
  <PlayIcon />, <PlayIcon ghost />, <StopIcon />, <HaltIcon />, null,
  <ClearIcon />, <ClearIcon two />, null,
  <BinocularIcon />, <BroomIcon />, null,
  <LogIcon />, <HelpBook />,
];

function JMeterWindow() {
  return (
    <JMeter>
      <TitleBar>
        <JMeterFeather />
        <TitleText>APITesting.jmx (C:\Users\Bruno\MastersCodeBase\JMeterTests\APITesting.jmx) - Apache JMeter (5.6.2)</TitleText>
        <WinButton><Minus size={13} strokeWidth={1} /></WinButton>
        <WinButton><Square size={11} strokeWidth={1} /></WinButton>
        <WinButton><X size={14} strokeWidth={1} /></WinButton>
      </TitleBar>
      <MenuBar>
        {['File', 'Edit', 'Search', 'Run', 'Options', 'Tools', 'Help'].map(m => <span key={m}>{m}</span>)}
      </MenuBar>
      <ToolBar>
        {toolbar.map((t, i) => t ? <ToolSlot key={i}>{t}</ToolSlot> : <ToolSep key={i} />)}
        <ToolStatus>
          <span>00:00:54</span>
          <WarnIcon />
          <RedCount>2</RedCount>
          <span>1/1</span>
          <Orb />
        </ToolStatus>
      </ToolBar>
      <JBody>
        <TreePane>
          <Guide $x={5} $h={100} />
          <Guide $x={25} $h={80} />
          <TreeRow $indent={0}><ChevronDown size={13} /><FlaskIcon /><span>Test Plan</span></TreeRow>
          <TreeRow $indent={20}><ChevronDown size={13} /><GearIcon /><span>Thread Group</span></TreeRow>
          <TreeRow $indent={58}><PipetteIcon /><span>MastersTestAPI</span></TreeRow>
          <TreeRow $indent={60}><ListenerIcon /><span>View Results Tree</span></TreeRow>
          <TreeRow $indent={60} $selected><ListenerIcon /><span>View Results in Table</span></TreeRow>
          <TreeRow $indent={58}><TimerIcon /><span>Constant Timer</span></TreeRow>
        </TreePane>
        <Splitter><SplitGrip /></Splitter>
        <ResultsPane>
          <ResultsForm>
            <PaneTitle>View Results in Table</PaneTitle>
            <FormRow><FormLabel $w={69}>Name:</FormLabel><Field>View Results in Table</Field></FormRow>
            <FormRow><FormLabel $w={69}>Comments:</FormLabel><Field /></FormRow>
            <Legend>Write results to file / Read from file</Legend>
            <FormRow>
              <FormLabel $w={59} $pad={4}>Filename</FormLabel>
              <Field />
              <FormLabel $w={64} $pad={4}>Successes</FormLabel>
              <ConfigureBtn>Configure</ConfigureBtn>
            </FormRow>
          </ResultsForm>
          <JTable>
            <JHead>
              {jColumns.map(c => <JHeadCell key={c}>{c}</JHeadCell>)}
            </JHead>
            {sampleTimes.map((t, i) => {
              const n = i + 11;
              const ms = visibleMs[n - 31];
              const open = n >= 31;
              return (
                <JRow key={n}>
                  <JCell>{n}</JCell>
                  <JCell>18:23:{t}</JCell>
                  <JCell $align="flex-start">Thread Group 1-1</JCell>
                  <JCell $align="flex-start">{open && 'MastersTestAPI'}</JCell>
                  <JCell>{ms}</JCell>
                  <JCell $align="center">{open && <Shield />}</JCell>
                  <JCell>{open && (n === 41 ? 657 : 651)}</JCell>
                  <JCell>{open && 182}</JCell>
                  <JCell>{n === 38 ? 105 : ms}</JCell>
                  <JCell>0</JCell>
                </JRow>
              );
            })}
            <JScroll />
          </JTable>
          <JFooter>
            <JCheck>✓</JCheck>
            <FooterText $mr={10}>Scroll automatically?</FooterText>
            <JCheck />
            <FooterText $mr={148}>Child samples?</FooterText>
            <Stat $color="#2b2b2b" $w={193}><StatLabel $color="#bbb">No of Samples</StatLabel>45</Stat>
            <Stat $color="#111" $w={156}><StatLabel>Latest Sample</StatLabel>107</Stat>
            <Stat $color="#1818ff" $w={126}><StatLabel>Average</StatLabel>113</Stat>
            <Stat $color="#ff1a1a" $w={100}><StatLabel>Deviation</StatLabel>22</Stat>
          </JFooter>
        </ResultsPane>
      </JBody>
    </JMeter>
  );
}

function ClockWidget() {
  return (
    <ClockWindow>
      <ClockNav>
        <NavTop>
          <NavItem><Menu size={18} strokeWidth={1.2} /></NavItem>
          <NavItem><FocusIcon /></NavItem>
          <NavItem><Hourglass size={18} strokeWidth={1.2} /></NavItem>
          <NavItem><Bell size={18} strokeWidth={1.2} /></NavItem>
          <NavItem $active><Timer size={18} strokeWidth={1.2} /></NavItem>
          <NavItem><Globe size={18} strokeWidth={1.2} /></NavItem>
        </NavTop>
        <Avatar>BF</Avatar>
        <NavGear><Settings size={17} strokeWidth={1.2} /></NavGear>
      </ClockNav>
      <ClockMain>
        <ClockTitle>
          <ClockApp />
          <span>Clock</span>
          <ClockControls>
            <WinButton $color="#8c8c8c"><Minus size={13} strokeWidth={1} /></WinButton>
            <WinButton $color="#8c8c8c"><Square size={11} strokeWidth={1} /></WinButton>
            <WinButton $color="#8c8c8c"><X size={14} strokeWidth={1} /></WinButton>
          </ClockControls>
        </ClockTitle>
        <TimeTools>
          <Maximize2 size={17} strokeWidth={1.1} />
          <OverlayIcon />
        </TimeTools>
        <TimeRow>00:01:24<Fraction>.74</Fraction></TimeRow>
        <UnitRow><Unit>hr</Unit><Unit>min</Unit><Unit>sec</Unit></UnitRow>
        <ClockButtons>
          <RoundBtn $primary><Pause size={26} color="#fff" fill="#fff" /></RoundBtn>
          <RoundBtn><Flag size={22} fill="#1b1b1b" strokeWidth={1.4} /></RoundBtn>
          <RoundBtn><RotateCcw size={22} strokeWidth={1.2} /></RoundBtn>
        </ClockButtons>
      </ClockMain>
    </ClockWindow>
  );
}

function WordWindow() {
  return (
    <Word>
      <WordTitle>
        <Gem size={17} strokeWidth={1} />
        <Minus size={13} strokeWidth={1} style={{ marginLeft: 5 }} />
        <Copy size={11} strokeWidth={1} style={{ marginLeft: 8 }} />
        <X size={15} strokeWidth={1} style={{ marginLeft: 8 }} />
      </WordTitle>
      <WordActions>
        <CutButton />
        <EditingBtn><Pencil size={15} strokeWidth={1} /><span>Editing</span><ChevronDown size={9} /></EditingBtn>
        <ShareBtn><Share size={13} /><span>Share</span><ChevronDown size={10} style={{ marginLeft: 6 }} /></ShareBtn>
      </WordActions>
      <Ribbon>
        <RibbonGroup $w={26} $align="flex-start">
          <RibbonIcon><BlueSliver /></RibbonIcon>
          <RibbonLabel>or</RibbonLabel>
          <RibbonGroupName>or</RibbonGroupName>
        </RibbonGroup>
        <RibbonGroup $w={63}>
          <RibbonIcon><AddinsIcon /></RibbonIcon>
          <RibbonLabel>Add-ins</RibbonLabel>
          <RibbonGroupName>Add-ins</RibbonGroupName>
        </RibbonGroup>
        <RibbonChevron><ChevronDown size={13} /></RibbonChevron>
      </Ribbon>
      <WordStatus>
        <StatusGlyph />
        <Minus size={11} style={{ marginRight: 3 }} />
        <ZoomTrack />
        <Plus size={11} />
        <span style={{ marginLeft: 9 }}>100%</span>
      </WordStatus>
    </Word>
  );
}

function bookmarkIcon(kind) {
  if (kind === 'royal') return <RoyalIcon />;
  if (kind === 'rsa') return <RsaIcon />;
  if (kind === 'code') return <CodewarsIcon />;
  return <Folder />;
}

function ChromeWindow() {
  return (
    <Chrome>
      <TabStrip>
        {tabs.map(t => (
          <Tab key={t.title} $active={t.active} $sep={t.sep}>
            {t.icon}
            <TabTitle>{t.title}</TabTitle>
            <X size={13} strokeWidth={2.4} />
          </Tab>
        ))}
        <StripRight>
          <Plus size={18} strokeWidth={2} />
          <StripControls>
            <ChevronDown size={15} strokeWidth={1.2} />
            <Minus size={15} strokeWidth={1.4} />
            <Copy size={13} strokeWidth={1.4} />
            <X size={16} strokeWidth={1.2} />
          </StripControls>
        </StripRight>
      </TabStrip>
      <Toolbar>
        <NavBtn><ArrowLeft size={18} /></NavBtn>
        <NavBtn $dim><ArrowRight size={18} /></NavBtn>
        <NavBtn><RotateCw size={17} strokeWidth={2.2} /></NavBtn>
        <NavBtn><House size={18} /></NavBtn>
        <Omnibox>
          <Lock size={13} fill="#5f6368" />
          <Url>us-east-1.console.aws.amazon.com/ec2/home?region=us-east-1#Instances:v=3;$case=tags:true%5C,client:false;$regex=tags:false%5C,client:false;sort=instanceState</Url>
          <Share size={15} />
          <Star size={16} style={{ marginLeft: 8 }} />
        </Omnibox>
        <Extensions>
          <RotateCw size={17} strokeWidth={2.4} />
          <Copy size={17} strokeWidth={2.4} />
          <Puzzle size={17} fill="#5f6368" />
          <Square size={16} strokeWidth={2.6} />
          <ProfilePic />
          <UpdatePill>
            <span>Update</span>
            <Dots><i /><i /><i /></Dots>
          </UpdatePill>
        </Extensions>
      </Toolbar>
      <Bookmarks>
        {bookmarks.map(([kind, label]) => (
          <Bookmark key={label} $gap={kind === 'folder' ? 10 : 8}>
            {bookmarkIcon(kind)}
            <span>{label}</span>
          </Bookmark>
        ))}
      </Bookmarks>
      <AwsHeader>
        <AwsLogo>aws<LogoSmile><SmileArrow /></LogoSmile></AwsLogo>
        <ServicesBtn><Grip size={18} strokeWidth={2.6} /><span>Services</span></ServicesBtn>
        <AwsSearch>
          <Search size={15} />
          <i>Search</i>
          <span>[Alt+S]</span>
        </AwsSearch>
        <HeaderRight>
          <HeaderIcon><SquareTerminal size={18} /></HeaderIcon>
          <HeaderIcon><Bell size={18} strokeWidth={2.2} /></HeaderIcon>
          <HeaderIcon><CircleHelp size={18} /></HeaderIcon>
          <HeaderIcon><Settings size={18} /></HeaderIcon>
          <HeaderMenu>N. Virginia <Caret /></HeaderMenu>
          <HeaderMenu $last>Bruno Rodrigues Franco <Caret /></HeaderMenu>
        </HeaderRight>
      </AwsHeader>
      <ConsoleBody>
        <Sidebar>
          {sideNav.map((n, i) => {
            if (n.head) {
              return (
                <SideHeader key={i} $flush={n.flush}>
                  <Caret $s={5} />
                  <span>{n.head}</span>
                </SideHeader>
              );
            }
            if (n.tag) return <NewTag key={i}>{n.tag}</NewTag>;
            return <SideItem key={i} $active={n.active}>{n.item}</SideItem>;
          })}
          <SideClose><X size={20} strokeWidth={1.6} /></SideClose>
        </Sidebar>
        <VScroll $w={18} $line>
          <ArrowUp $left={3} />
          <VThumb $left={1} $right={1} $h={661} />
          <ArrowDown $left={3} />
        </VScroll>
        <Main>
          <InstancesTop>
            <TopRow>
              <Heading>Instances <span>(16)</span><a>Info</a></Heading>
              <ConsoleBtn $w={50} $dark><RotateCw size={19} /></ConsoleBtn>
              <ConsoleBtn $w={99} $dim>Connect</ConsoleBtn>
              <ConsoleBtn $w={156}>Instance state <Caret $s={5} /></ConsoleBtn>
              <ConsoleBtn $w={113}>Actions <Caret $s={5} /></ConsoleBtn>
              <LaunchGroup>
                <LaunchBtn $w={155} $radius="2px 0 0 2px">Launch instances</LaunchBtn>
                <LaunchBtn $w={30} $radius="0 2px 2px 0"><Caret $s={5} /></LaunchBtn>
              </LaunchGroup>
            </TopRow>
            <FilterRow>
              <FilterBox><Search size={16} color="#687078" /><span>Find Instance by attribute or tag (case-sensitive)</span></FilterBox>
              <Pager>
                <ChevronLeft size={20} color="#aab7b8" strokeWidth={1.6} />
                <span>1</span>
                <ChevronRight size={20} color="#aab7b8" strokeWidth={1.6} />
                <PagerGear><Settings size={18} color="#545b64" /></PagerGear>
              </Pager>
            </FilterRow>
          </InstancesTop>
          <HeadRow>
            <CheckCell><CheckBox /></CheckCell>
            <HeadCell><NameHead>Name <Pencil size={13} color="#545b64" /></NameHead><HollowTri /></HeadCell>
            <HeadCell>Instance ID</HeadCell>
            <HeadCell $dark>Instance state <SortTri /></HeadCell>
            <HeadCell>Instance type <HollowTri /></HeadCell>
            <HeadCell>Status check</HeadCell>
            <HeadCell>Alarm status</HeadCell>
            <HeadCell>Availability Zone <HollowTri /></HeadCell>
            <HeadCell>Public IPv4 DNS <HollowTri /></HeadCell>
            <HeadCell>Public IPv4 ... <HollowTri /></HeadCell>
            <HeadCell>Elastic IP</HeadCell>
          </HeadRow>
          {instances.map(([id, state, az, dns, ip]) => {
            const info = stateInfo[state];
            const StateIcon = info.Icon;
            const running = state === 'run';
            return (
              <DataRow key={id}>
                <CheckCell><CheckBox /></CheckCell>
                <DataCell />
                <IdLink>{id}</IdLink>
                <DataCell $gap={4}>
                  <StateIcon size={16} color={info.color} strokeWidth={1.8} style={{ flex: 'none' }} />
                  <StateText $color={info.color} $mr={info.mr}>{info.label}</StateText>
                  <ZoomIn size={15} color="#545b64" style={{ flex: 'none' }} />
                  <ZoomOut size={15} color="#545b64" style={{ flex: 'none', marginLeft: 6 }} />
                </DataCell>
                <DataCell>t2.micro</DataCell>
                <DataCell $gap={4}>
                  {running ? (
                    <>
                      <CircleCheck size={16} color="#1d8102" strokeWidth={1.8} style={{ flex: 'none' }} />
                      <StateText $color="#1d8102">2/2 checks passed</StateText>
                    </>
                  ) : '–'}
                </DataCell>
                <DataCell $gap={14}>No alarms <Plus size={18} color="#545b64" style={{ flex: 'none' }} /></DataCell>
                <DataCell>{az}</DataCell>
                <DataCell>{dns}</DataCell>
                <DataCell>{ip}</DataCell>
                <DataCell>–</DataCell>
              </DataRow>
            );
          })}
          <HScroll><HThumb /></HScroll>
          <DetailPane>
            <Sash />
            <DetailHead>
              Select an instance
              <DetailTools>
                <Settings size={18} />
                <ToolDivider />
                <X size={18} />
              </DetailTools>
            </DetailHead>
          </DetailPane>
        </Main>
        <VScroll $w={18}>
          <ArrowUp $left={6} />
          <VThumb $left={3} $right={0} $h={706} />
          <ArrowDown $left={6} />
        </VScroll>
      </ConsoleBody>
      <AwsFooter>
        <FootLink $mr={30}><SquareTerminal size={17} />CloudShell</FootLink>
        <FootLink>Feedback</FootLink>
        <FootRight>
          <span>© 2023, Amazon Web Services, Inc. or its affiliates.</span>
          <span>Privacy</span>
          <span>Terms</span>
          <span>Cookie preferences</span>
        </FootRight>
      </AwsFooter>
    </Chrome>
  );
}

export default function App() {
  return (
    <Desktop>
      <GlobalStyle />
      <JMeterWindow />
      <WordWindow />
      <ChromeWindow />
      <ClockWidget />
    </Desktop>
  );
}
